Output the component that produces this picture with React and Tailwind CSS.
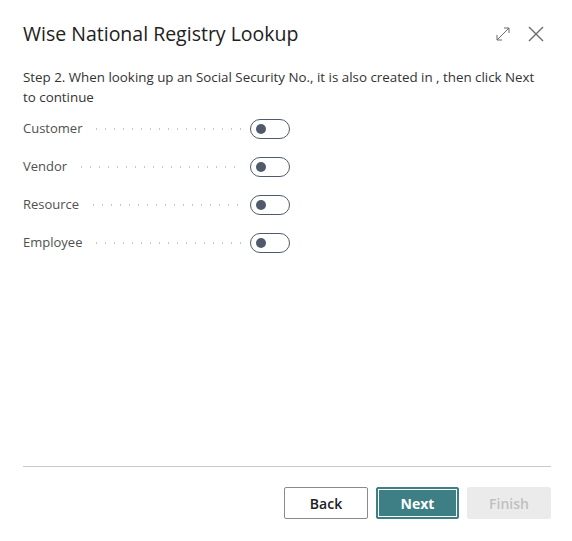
import React, { useState } from "react";

const options = ["Customer", "Vendor", "Resource", "Employee"];

const Toggle = ({ on, onClick }) => (
  <button
    type="button"
    onClick={onClick}
    className={`relative w-[40px] h-[20px] rounded-full border ${
      on ? "bg-[#3d7f84] border-[#3d7f84]" : "bg-white border-[#505a6b]"
    }`}
  >
    <span
      className={`absolute top-[4px] w-[10px] h-[10px] rounded-full ${
        on ? "left-[25px] bg-white" : "left-[5px] bg-[#505a6b]"
      }`}
    />
  </button>
);

const App = () => {
  const [checked, setChecked] = useState({});

  return (
    <div className="w-[572px] h-[541px] bg-white flex flex-col pl-[23px] pr-[21px] font-['Segoe_UI','Open_Sans',sans-serif] text-[#212121]">
      {/* header */}
      <div className="flex items-center justify-between pt-[18px] h-[50px]">
        <h1 className="text-[19.5px] font-medium">Wise National Registry Lookup</h1>
        <div className="flex items-center gap-[16px] text-[#6b6b6b] pr-[6px]">
          <svg width="16" height="16" viewBox="0 0 16 16" fill="none" stroke="currentColor" strokeWidth="1">
            <path d="M2 14 L14 2 M9 2 H14 V7 M2 9 V14 H7" />
          </svg>
          <svg width="18" height="18" viewBox="0 0 18 18" fill="none" stroke="currentColor" strokeWidth="1.4">
            <path d="M2 2 L16 16 M16 2 L2 16" />
          </svg>
        </div>
      </div>

      <p className="mt-[17px] pr-[2px] text-[13.35px] leading-[20px] text-[#333]">
        Step 2. When looking up an Social Security No., it is also created in , then click Next to continue
      </p>

      {/* option rows */}
      <div className="mt-[12px] flex flex-col gap-[18px]">
        {options.map((name) => (
          <div key={name} className="flex items-center h-[20px]">
            <div className="flex items-center w-[227px] pr-[8px]">
              <span className="text-[13px] text-[#505050] whitespace-nowrap">{name}</span>
              <span className="flex-1 ml-[10px] h-[2px] bg-[radial-gradient(circle,#c8c8c8_0.8px,transparent_1px)] bg-[length:9px_2px]" />
            </div>
            <Toggle
              on={!!checked[name]}
              onClick={() => setChecked({ ...checked, [name]: !checked[name] })}
            />
          </div>
        ))}
      </div>

      <div className="flex-1" />

      {/* footer */}
      <div className="border-t border-[#c8c8c8] pt-[20px] pb-[22px] flex justify-end gap-[8px]">
        <button className="w-[84px] h-[32px] border border-[#8a8a8a] rounded-[2px] bg-white text-[14px] font-semibold text-[#212121]">
          Back
        </button>
        <button className="w-[83px] h-[32px] rounded-[2px] bg-[#3d7f84] text-white text-[14px] font-bold border border-[#3d7f84] outline outline-1 outline-white -outline-offset-[3px]">
          Next
        </button>
        <button className="w-[84px] h-[32px] rounded-[2px] bg-[#ebebeb] text-[#c0c0c0] text-[14px] font-semibold" disabled>
          Finish
        </button>
      </div>
    </div>
  );
};

export default App;
